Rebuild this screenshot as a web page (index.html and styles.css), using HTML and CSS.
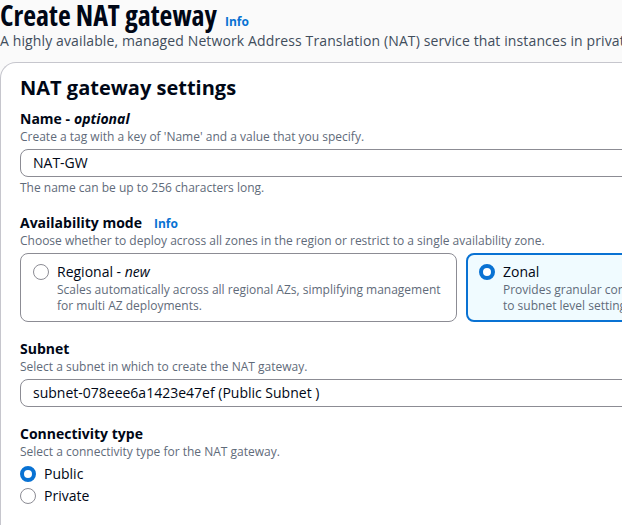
FILE: index.html
```html
<!DOCTYPE html>
<html lang="en">
<head>
    <meta charset="UTF-8">
    <title>Create NAT gateway</title>
    <link rel="stylesheet" href="styles.css">
</head>
<body>
    <div class="page">
        <!-- Page header -->
        <header class="page-header">
            <h1 class="page-title">Create NAT gateway <a class="info-link" href="#">Info</a></h1>
            <p class="page-desc">A highly available, managed Network Address Translation (NAT) service that instances in private subnets can use to connect to services in other VPCs, on-premises networks, or the internet.</p>
        </header>

        <!-- Settings container -->
        <section class="panel">
            <h2 class="panel-title">NAT gateway settings</h2>

            <div class="field">
                <label class="field-label">Name - <i>optional</i></label>
                <div class="field-desc">Create a tag with a key of 'Name' and a value that you specify.</div>
                <div class="input">NAT-GW</div>
                <div class="field-hint">The name can be up to 256 characters long.</div>
            </div>

            <div class="field">
                <label class="field-label">Availability mode <a class="info-link" href="#">Info</a></label>
                <div class="field-desc">Choose whether to deploy across all zones in the region or restrict to a single availability zone.</div>
                <div class="tiles">
                    <div class="tile">
                        <span class="radio"></span>
                        <div class="tile-body">
                            <div class="tile-label">Regional - <i>new</i></div>
                            <div class="tile-desc">Scales automatically across all regional AZs, simplifying management for multi AZ deployments.</div>
                        </div>
                    </div>
                    <div class="tile is-selected">
                        <span class="radio is-checked"></span>
                        <div class="tile-body">
                            <div class="tile-label">Zonal</div>
                            <div class="tile-desc">Provides granular control over NAT gateway placement, limited<br>to subnet level settings.</div>
                        </div>
                    </div>
                </div>
            </div>

            <div class="field">
                <label class="field-label">Subnet</label>
                <div class="field-desc">Select a subnet in which to create the NAT gateway.</div>
                <div class="input">subnet-078eee6a1423e47ef (Public Subnet )</div>
            </div>

            <div class="field">
                <label class="field-label">Connectivity type</label>
                <div class="field-desc">Select a connectivity type for the NAT gateway.</div>
                <div class="radio-group">
                    <div class="radio-row"><span class="radio is-checked"></span>Public</div>
                    <div class="radio-row"><span class="radio"></span>Private</div>
                </div>
            </div>
        </section>
    </div>
</body>
</html>
```

FILE: styles.css
```css
* {
    margin: 0;
    padding: 0;
    box-sizing: border-box;
}

body {
    font-family: 'Open Sans', 'Noto Sans', sans-serif;
    color: #000716;
    background-color: #fafafa;
    overflow: hidden;
}

.page {
    width: 960px;
}

/* Header */
.page-header {
    padding: 0 0 10px 0;
}

.page-title {
    font-size: 28px;
    font-weight: 700;
    font-stretch: 80%;
    line-height: 30px;
    display: flex;
    align-items: baseline;
    gap: 8px;
}

.info-link {
    font-size: 12px;
    font-weight: 700;
    font-stretch: 100%;
    line-height: 16px;
    color: #0972d3;
    text-decoration: none;
}

.page-desc {
    font-size: 14px;
    line-height: 22px;
    letter-spacing: 0.12px;
    color: #414d5c;
    white-space: nowrap;
}

/* Main panel */
.panel {
    background: #fff;
    border: 1px solid #c6c6cd;
    border-right: none;
    border-radius: 16px 0 0 0;
    padding: 11px 19px 20px 19px;
    min-height: 470px;
}

.panel-title {
    font-size: 20px;
    font-weight: 700;
    font-stretch: 90%;
    line-height: 28px;
    margin-bottom: 7px;
}

.field {
    margin-bottom: 17px;
}

.field-label {
    display: flex;
    align-items: baseline;
    gap: 12px;
    font-size: 14px;
    font-weight: 700;
    line-height: 20px;
}

.field-label i {
    margin-left: -8px;
}

.field-desc,
.field-hint {
    font-size: 12px;
    line-height: 16px;
    color: #5f6b7a;
}

.field-desc {
    margin-bottom: 4px;
}

.field-hint {
    margin-top: 3px;
}

.input {
    height: 28px;
    border: 1px solid #8c8c94;
    border-radius: 8px;
    padding: 3px 12px;
    font-size: 14px;
    line-height: 20px;
    white-space: nowrap;
}

/* Availability tiles */
.tiles {
    display: flex;
    gap: 9px;
}

.tile {
    flex: none;
    display: flex;
    gap: 8px;
    width: 437px;
    height: 69px;
    padding: 8px 12px;
    border: 1px solid #8c8c94;
    border-radius: 8px;
}

.tile.is-selected {
    border: 2px solid #0972d3;
    background: #f0fbff;
    padding: 7px 11px;
}

.tile-label {
    font-size: 14px;
    line-height: 20px;
}

.tile-desc {
    font-size: 12px;
    line-height: 16px;
    color: #5f6b7a;
}

/* Radios */
.radio {
    flex: none;
    width: 16px;
    height: 16px;
    margin-top: 2px;
    border: 1px solid #8c8c94;
    border-radius: 50%;
    background: #fff;
}

.radio.is-checked {
    border: 4px solid #0972d3;
}

.radio-group {
    display: flex;
    flex-direction: column;
    gap: 2px;
    margin-top: 4px;
}

.radio-row {
    display: flex;
    align-items: center;
    gap: 8px;
    font-size: 14px;
    line-height: 20px;
}

.radio-row .radio {
    margin-top: 0;
}
```
